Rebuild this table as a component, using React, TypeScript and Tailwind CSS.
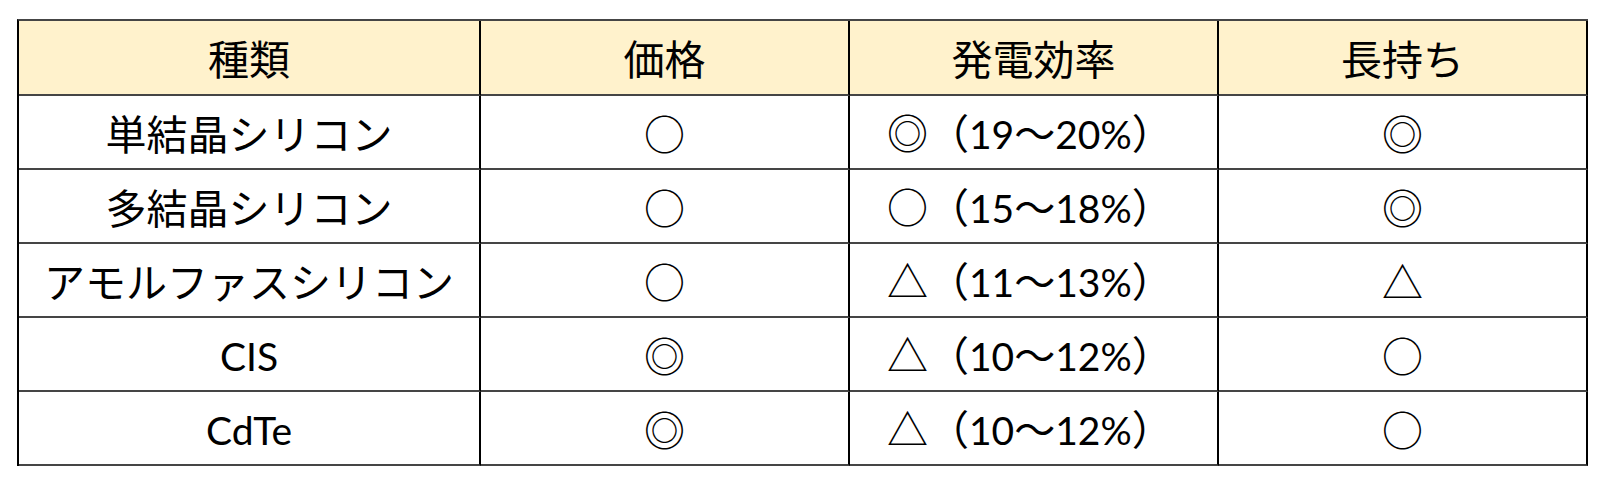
const header = ["種類", "価格", "発電効率", "長持ち"];

const rows: string[][] = [
  ["単結晶シリコン", "○", "◎（19～20%）", "◎"],
  ["多結晶シリコン", "○", "○（15～18%）", "◎"],
  ["アモルファスシリコン", "○", "△（11～13%）", "△"],
  ["CIS", "◎", "△（10～12%）", "○"],
  ["CdTe", "◎", "△（10～12%）", "○"],
];

// ASCII runs go to the Latin face, everything else to the CJK face
function Txt({ s }: { s: string }) {
  const parts = s.split(/([\x20-\x7e]+)/).filter(Boolean);
  return (
    <span>
      {parts.map((p, i) =>
        /^[\x20-\x7e]+$/.test(p) ? (
          <span key={i} className="text-[39px]" style={{ fontFamily: '"Lato", sans-serif' }}>
            {p}
          </span>
        ) : (
          <span key={i}>{p}</span>
        )
      )}
    </span>
  );
}

export default function App() {
  return (
    <div
      className="w-[1602px] h-[480px] bg-white pt-[19px] pl-[17px]"
      style={{ fontFamily: '"Noto Sans CJK JP", sans-serif' }}
    >
      <div className="grid grid-cols-[462px_369px_369px_369px] w-max border-l-2 border-t-2 border-l-black border-t-[#454545] text-[41px] leading-none text-black">
        {header.map((h) => (
          <div
            key={h}
            className="h-[75px] flex items-center justify-center bg-[#fff2cc] border-r-2 border-b-2 border-r-black border-b-[#454545]"
          >
            {h}
          </div>
        ))}
        {rows.map((r) =>
          r.map((c, i) => (
            <div
              key={r[0] + i}
              className={
                "h-[74px] flex items-center border-r-2 border-b-2 border-r-black border-b-[#454545] " +
                (i === 2 ? "justify-start pl-[37px]" : "justify-center")
              }
            >
              <Txt s={c} />
            </div>
          ))
        )}
      </div>
    </div>
  );
}
